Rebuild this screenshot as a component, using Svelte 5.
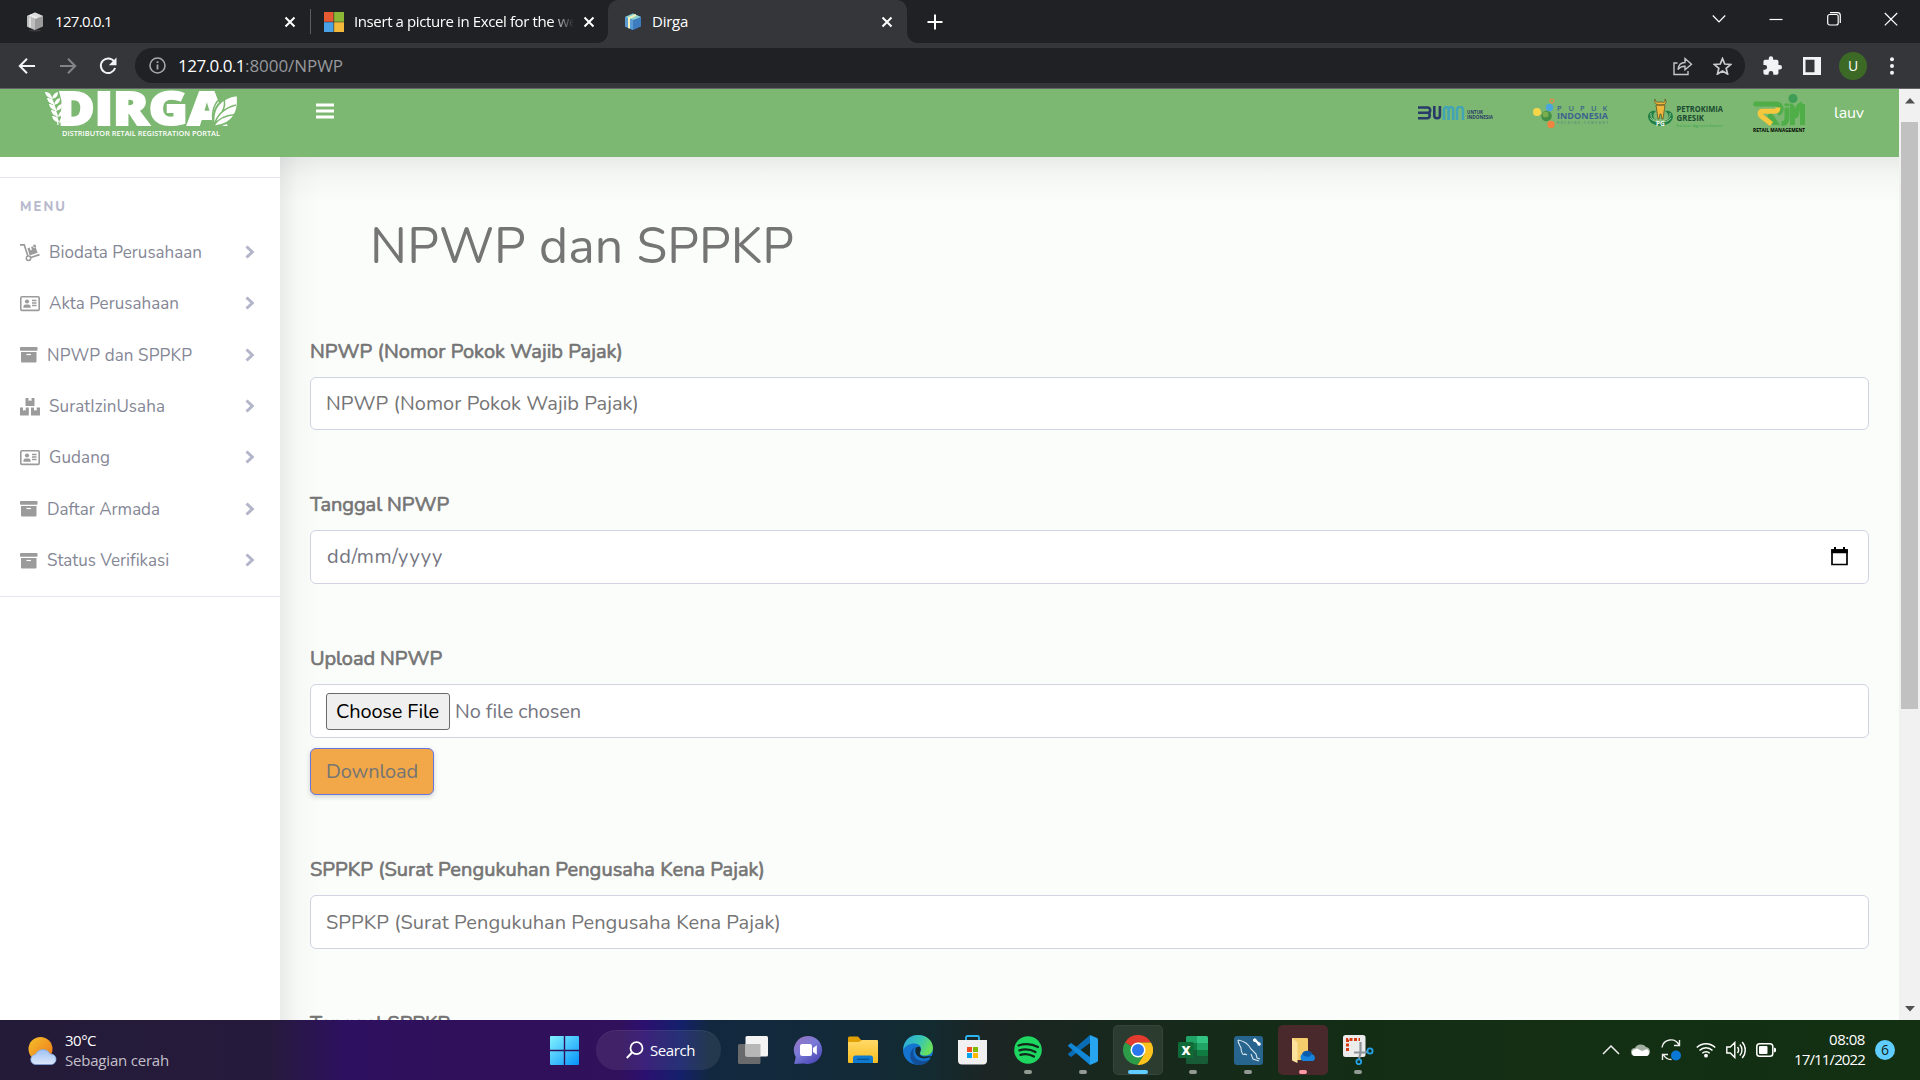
<script>
  // Spreads letters so that a label takes exactly the given width.
  function fit(node, width) {
    const natural = node.getBoundingClientRect().width;
    const count = node.textContent.length;
    node.style.letterSpacing = `${(width - natural) / count}px`;
  }

  const menu = [
    { icon: 'dolly', label: 'Biodata Perusahaan', w: 153 },
    { icon: 'card', label: 'Akta Perusahaan', w: 130 },
    { icon: 'box', label: 'NPWP dan SPPKP', w: 145 },
    { icon: 'boxes', label: 'SuratIzinUsaha', w: 116 },
    { icon: 'card', label: 'Gudang', w: 61 },
    { icon: 'box', label: 'Daftar Armada', w: 113 },
    { icon: 'box', label: 'Status Verifikasi', w: 122 }
  ];
</script>

{#snippet cross()}
  <svg width="12" height="12" viewBox="0 0 12 12"><path d="M1.5 1.5l9 9M10.5 1.5l-9 9" stroke="#fff" stroke-width="2" /></svg>
{/snippet}

{#snippet cube(dark)}
  <svg width="18" height="20" viewBox="0 0 18 20">
    {#if dark}
      <ellipse cx="9" cy="18.5" rx="6" ry="1" fill="#3a3a3c" />
      <path d="M1 4l8-3.5L17 4v10.500l-8 3.500-8-3.500z" fill="#9b9b9b" />
      <path d="M1 4l8-3.500L17 4 9 7z" fill="#ddd" /><path d="M1 4l8 3v11l-8-3.500z" fill="#bdbdbd" />
      <path d="M4 3l7 3M4 5.500v10" stroke="#f2f2f2" stroke-width="1.200" />
    {:else}
      <path d="M1 5l8-3.500L17 5v9.500L9 18l-8-3.500z" fill="#3e7cc0" />
      <path d="M1 5l8-3.500L17 5 9 8z" fill="#8fd3cf" /><path d="M1 5l8 3v10l-8-3.500z" fill="#5a9bd4" />
      <path d="M12 2.800L5 6.200v10" stroke="#f5f1b8" stroke-width="2" fill="none" />
    {/if}
  </svg>
{/snippet}

{#snippet menuIcon(kind)}
  {#if kind === 'dolly'}
    <svg class="mi" width="20" height="18" viewBox="0 0 20 18" fill="#9b9b9b">
      <path d="M0 .8h4.200l3.600 11M10 13.800l9.500-3.200" fill="none" stroke="#9b9b9b" stroke-width="1.700" />
      <circle cx="8.500" cy="14.300" r="2.200" fill="#fff" stroke="#9b9b9b" stroke-width="1.500" />
      <path d="M7.500 4.200l2-.7 1 2.800 1.500-.5L11 3l4-1.400 2.600 7.200-8 2.800z" /><path d="M12.500 1.200l1.300 3 1.600-.6-1-2.800" fill="#fff" />
      <path d="M12.800 1l2.600-.6.8 2.600-2 .6z" />
    </svg>
  {:else if kind === 'card'}
    <svg class="mi" width="20" height="16" viewBox="0 0 20 16" fill="#9b9b9b">
      <rect x=".8" y=".8" width="18.400" height="13.600" rx="1.200" fill="none" stroke="#9b9b9b" stroke-width="1.600" />
      <circle cx="7" cy="5.500" r="2.100" /><path d="M3.300 11.700c0-2 1-3.200 2.200-3.200h3c1.300 0 2.200 1.200 2.200 3.200z" />
      <path d="M12 4.500h4.500M12 7h4.500M12 9.500h4.500" stroke="#9b9b9b" stroke-width="1.300" />
    </svg>
  {:else if kind === 'box'}
    <svg class="mi" width="18" height="16" viewBox="0 0 18 16" fill="#9b9b9b">
      <rect x="0" y="0" width="17.500" height="3.700" rx=".8" /><path d="M1 5h15.500v9.500a1 1 0 0 1-1 1H2a1 1 0 0 1-1-1z" />
      <path d="M6.500 7.500h4.500" stroke="#fff" stroke-width="1.200" />
    </svg>
  {:else}
    <svg class="mi" width="20" height="18" viewBox="0 0 20 18" fill="#9b9b9b">
      <path d="M5.500 0h3v3.200l1.500-1 1.500 1V0h3v8h-9zM0 9.500h3v3.200l1.300-.8 1.400.8V9.500h3.100v8H0zM11 9.500h3v3.200l1.300-.8 1.400.8V9.500H20v8h-9z" />
    </svg>
  {/if}
{/snippet}

<div class="screen">
  <header class="tabs">
    <div class="tab first">
      {@render cube(true)}
      <span class="tt" use:fit={57}>127.0.0.1</span>
      <i class="x">{@render cross()}</i>
    </div>
    <div class="tab second">
      <svg width="20" height="20" viewBox="0 0 20 20"><path d="M0 0h9.800v10H0z" fill="#e65a33" /><path d="M9.800 0H20v10H9.800z" fill="#8bb734" /><path d="M0 10h9.800v10H0z" fill="#4ba1e6" /><path d="M9.800 10H20v10H9.800z" fill="#f2b93b" /><path d="M0 10h20M9.800 0v20" stroke="#202124" stroke-opacity=".45" /></svg>
      <span class="tt fade"><span class="tin" use:fit={223}>Insert a picture in Excel for the we</span></span>
      <i class="x">{@render cross()}</i>
    </div>
    <div class="tab active">
      {@render cube(false)}
      <span class="tt" use:fit={36}>Dirga</span>
      <i class="x">{@render cross()}</i>
    </div>
    <svg class="plus" width="16" height="16" viewBox="0 0 16 16"><path d="M8 .5v15M.5 8h15" stroke="#fff" stroke-width="2" /></svg>
    <div class="winctl">
      <svg width="14" height="14" viewBox="0 0 14 14"><path d="M.8 3.500L7 10l6.200-6.500" /></svg>
      <svg width="14" height="14" viewBox="0 0 14 14"><path d="M.5 7.500h13" /></svg>
      <svg width="14" height="14" viewBox="0 0 14 14"><rect x=".7" y="2.500" width="10.500" height="10.500" rx="2" /><path d="M3 .7h7.500a2.800 2.800 0 0 1 2.800 2.800V11" /></svg>
      <svg width="14" height="14" viewBox="0 0 14 14"><path d="M.8 1l12.400 12.400M13.200 1L.8 13.400" /></svg>
    </div>
  </header>

  <div class="toolbar">
    <svg class="nav" width="18" height="18" viewBox="0 0 18 18"><path d="M17 9H2M9 1.800L1.800 9 9 16.200" stroke="#f1f3f4" /></svg>
    <svg class="nav" width="18" height="18" viewBox="0 0 18 18"><path d="M1 9h15M9 1.800L16.200 9 9 16.200" stroke="#828488" /></svg>
    <svg class="nav" width="18" height="18" viewBox="0 0 18 18"><path d="M15.300 4.800A7.300 7.300 0 1 0 16.100 11" stroke="#f1f3f4" /><path d="M17.500.5v7.700H9.800z" fill="#f1f3f4" /></svg>
    <div class="omni">
      <svg width="17" height="17" viewBox="0 0 17 17"><circle cx="8.500" cy="8.500" r="7.500" fill="none" stroke="#a5a7ab" stroke-width="1.600" /><path d="M8.500 7.500v5M8.500 4.300v1.800" stroke="#a5a7ab" stroke-width="1.800" /></svg>
      <span class="url"><span use:fit={67}>127.0.0.1</span><span class="path" use:fit={98}>:8000/NPWP</span></span>
      <svg class="share" width="20" height="20" viewBox="0 0 20 20"><path d="M4.500 7H1v11.500h14V15M5 13.500c.5-5 3-7 7-7V2.500l6.500 5.800-6.500 5.500V10.200c-3.500 0-5.500 1-7 3.300z" fill="none" stroke="#c3c5c8" stroke-width="1.400" /></svg>
      <svg width="19" height="18" viewBox="0 0 24 23"><path d="M12 2l2.900 7 7.600.6-5.800 4.900 1.800 7.300L12 17.900l-6.500 3.900 1.800-7.300L1.500 9.600 9.100 9z" fill="none" stroke="#c9cbcf" stroke-width="2.200" /></svg>
    </div>
    <svg class="puzzle" width="19" height="19" viewBox="1.500 1 21.500 21" fill="#f1f3f4"><path d="M20.500 11H19V7a2 2 0 0 0-2-2h-4V3.500a2.500 2.500 0 0 0-5 0V5H4a2 2 0 0 0-2 2v3.800h1.500a2.700 2.700 0 0 1 0 5.400H2V20a2 2 0 0 0 2 2h3.800v-1.500a2.700 2.700 0 0 1 5.400 0V22H17a2 2 0 0 0 2-2v-4h1.500a2.500 2.500 0 0 0 0-5z" /></svg>
    <svg class="panel" width="18" height="18" viewBox="0 0 18 18"><path d="M0 0h18v18H0zM2.500 2.700v12.600h9V2.700z" fill="#f1f3f4" fill-rule="evenodd" /></svg>
    <span class="avatar">U</span>
    <svg class="dots" width="4" height="18" viewBox="0 0 4 18" fill="#f1f3f4"><circle cx="2" cy="2.200" r="2" /><circle cx="2" cy="9" r="2" /><circle cx="2" cy="15.800" r="2" /></svg>
  </div>

  <div class="viewport">
    <div class="site">
      <div class="topbar">
        <svg class="dirga" width="194" height="50" viewBox="0 0 194 50">
          <g fill="#fff">
            <text class="heavy" x="12" y="36" font-size="46" textLength="170" lengthAdjust="spacingAndGlyphs" stroke="#fff" stroke-width="2">DIRGA</text>
            <path d="M0 0h14.500l3 12-1 26H8L0 14z" fill="#7cb871" />
            <path d="M5 5c4 7 8 18 9 31" stroke="#fff" stroke-width="1.300" fill="none" />
            {#each [[1, 6], [3, 12], [5, 18], [7, 24], [8, 30]] as [x, y]}
              <path d="M{x} {y - 3}c4 0 6 2 7 6-4 0-6-2-7-6z" />
              <path d="M{x + 13} {y - 3}c-4 1-5 3-6 7 4-1 6-3 6-7z" />
            {/each}
            <path d="M170 37.500c-3-18 6-29 23.500-31.500 2 15-3 30-23.500 31.500z" stroke="#7cb871" stroke-width="2" />
            <path d="M170 36c-4-14 1-24 9-28 3 6 2 10-1 15M170 36c3-10 10-17 22-20M170 36.500c4-7 11-10 21-11" fill="none" stroke="#7cb871" stroke-width="1.500" />
            <text class="mont semi" x="18" y="47" font-size="7.500" textLength="158" lengthAdjust="spacingAndGlyphs">DISTRIBUTOR RETAIL REGISTRATION PORTAL</text>
          </g>
        </svg>
        <svg class="burger" width="18" height="16" viewBox="0 0 18 16"><path d="M0 2h18M0 8h18M0 14h18" stroke="#fff" stroke-width="2.800" /></svg>
        <div class="partners">
          <svg width="75" height="14" viewBox="0 0 75 14">
            <g fill="none" stroke-width="2.600">
              <path d="M0 1.500h9.500a2.600 2.600 0 0 1 0 5.300H0M9.500 6.800a2.800 2.800 0 0 1 0 5.500H0M16.300 0v9.500a2.800 2.800 0 0 0 5.600 0V0" stroke="#293b68" />
              <path d="M26 14V3.500a2.300 2.300 0 0 1 4.600 0V14M30.600 3.500a2.300 2.300 0 0 1 4.600 0V14M39 14V3.800a3 3 0 0 1 6 0V14" stroke="#43a4b5" />
            </g>
            <text class="mont" x="49" y="8.300" font-size="4.800" textLength="16" lengthAdjust="spacingAndGlyphs" fill="#293b68">UNTUK</text>
            <text class="mont" x="49" y="13" font-size="4.800" textLength="26" lengthAdjust="spacingAndGlyphs" fill="#293b68">INDONESIA</text>
          </svg>
          <svg width="75" height="30" viewBox="0 0 75 30">
            <path d="M4 13l9 5 4-9M13 18l5 9" stroke="#b7cf85" stroke-width="1.500" fill="none" />
            <circle cx="4" cy="14" r="4" fill="#f7d64a" /><circle cx="16.500" cy="9.500" r="3.700" fill="#4ba6dd" /><circle cx="13.500" cy="18" r="5.300" fill="#438f45" /><circle cx="12.500" cy="16.500" r="3" fill="#79ad4e" /><circle cx="18" cy="26.500" r="3.700" fill="#ee8440" /><circle cx="19" cy="2.800" r="2" fill="none" stroke="#df8e48" stroke-width="1.200" />
            <text class="mont semi" x="24 35.500 47 58 69.500" y="13.300" font-size="7.500" fill="#3b6689">PUPUK</text>
            <text class="mont" x="24" y="20.500" font-size="8" textLength="51" lengthAdjust="spacingAndGlyphs" fill="#3d6290">INDONESIA</text>
            <text class="mont" x="24" y="25.500" font-size="3" textLength="51" fill="#5d957a">HOLDING COMPANY</text>
          </svg>
          <svg width="75" height="30" viewBox="0 0 75 30">
            <path d="M8 13c-5-1-8 2-8 6 1 6 6 8 12 9 7-1 12-3 13-9 0-4-3-7-8-6 5 3 5 10-4 10-9 0-9-7-5-10z" fill="#218047" />
            <path d="M3 15c-1 5 3 8 9 8s11-3 10-8M2 20c4 5 17 6 21 0" fill="none" stroke="#9fca8b" />
            <path d="M7 1c-1 4 1 5 3 6h5c3-1 4-3 2-6 1 3-2 4-3 3h-3C9 5 7 3 7 1zM8 7h9l-1 7-1 7h-1l-1-5h-1l-1 5h-1L9 14z" fill="#efb73c" stroke="#5f5524" stroke-width=".8" />
            <text class="mont" x="8" y="27.500" font-size="6.500" fill="#eef7eb">PG</text>
            <text class="mont" x="28.500" y="14" font-size="8.500" textLength="46.500" lengthAdjust="spacingAndGlyphs" fill="#1b4b32">PETROKIMIA</text>
            <text class="mont" x="28.500" y="23" font-size="8.500" textLength="27.500" lengthAdjust="spacingAndGlyphs" fill="#1b4b32">GRESIK</text>
            <text class="mont" x="28.500" y="28.500" font-size="4" textLength="46.500" fill="#4fac59">Solusi Agroindustri</text>
          </svg>
          <svg class="rjm" width="52" height="40" viewBox="0 0 52 40">
            <path d="M2.500 11h20c6.500 0 7.500 7.500 2 9.500M34 14.500V24c0 5-1.500 6.500-5.500 6.500M34 13v-2.500M39.500 32V16c0-2 0-3-2.500-3M49.500 32V11M39.500 20c1 4 4 4.500 4.500-1 .5-4 1.500-7 5.500-8" fill="none" stroke="#4fae48" stroke-width="5" stroke-linecap="butt" />
            <circle cx="2.700" cy="11" r="2.500" fill="#4fae48" />
            <path d="M18 19l9 13h-7l-6-9z" fill="#4fae48" />
            <path d="M25 14.500c0 2.500-1 3.700-4 3.700H9.500c-3 0-3 3.500-1 5L18.500 31" fill="none" stroke="#f6c83d" stroke-width="5" />
            <circle cx="40" cy="5.500" r="4.500" fill="#3f9d55" />
            <text class="mont" x="0" y="38.800" font-size="4.600" textLength="52" lengthAdjust="spacingAndGlyphs" fill="#000">RETAIL MANAGEMENT</text>
          </svg>
          <span class="user" use:fit={30}>lauv</span>
        </div>
      </div>
      <div class="body">
        <nav class="side">
          <div class="menu">
            <h6>MENU</h6>
            {#each menu as m}
              <a class="item">
                {@render menuIcon(m.icon)}
                <span use:fit={m.w}>{m.label}</span>
                <svg class="chev" width="10" height="14" viewBox="0 0 10 14"><path d="M1.500 1.500L7.300 7l-5.800 5.500" fill="none" stroke="#b3b5c9" stroke-width="3" /></svg>
              </a>
            {/each}
          </div>
        </nav>
        <main>
          <h1><span use:fit={424}>NPWP dan SPPKP</span></h1>
          <div class="group">
            <label><span use:fit={313}>NPWP (Nomor Pokok Wajib Pajak)</span></label>
            <div class="field short"><span class="ph" use:fit={313}>NPWP (Nomor Pokok Wajib Pajak)</span></div>
          </div>
          <div class="group">
            <label><span use:fit={139}>Tanggal NPWP</span></label>
            <div class="field date">
              <span use:fit={116}>dd/mm/yyyy</span>
              <svg width="17" height="19" viewBox="0 0 17 19"><path d="M1 3h15v14.500H1z" fill="none" stroke="#000" stroke-width="1.700" /><path d="M.3 2.200h16.400v4H.3zM3 0h2v3H3zM12 0h2v3h-2z" /></svg>
            </div>
          </div>
          <div class="group">
            <label><span use:fit={132}>Upload NPWP</span></label>
            <div class="field file"><button class="choose"><span use:fit={103}>Choose File</span></button><span use:fit={126}>No file chosen</span></div>
            <button class="download"><span use:fit={92}>Download</span></button>
          </div>
          <div class="group">
            <label><span use:fit={455}>SPPKP (Surat Pengukuhan Pengusaha Kena Pajak)</span></label>
            <div class="field"><span class="ph" use:fit={455}>SPPKP (Surat Pengukuhan Pengusaha Kena Pajak)</span></div>
          </div>
          <div class="group"><label><span use:fit={140}>Tanggal SPPKP</span></label></div>
        </main>
      </div>
    </div>
    <div class="scroll">
      <svg width="10" height="6" viewBox="0 0 10 6"><path d="M0 5.500L5 0l5 5.500z" fill="#505050" /></svg>
      <div class="thumb"></div>
      <svg class="down" width="10" height="6" viewBox="0 0 10 6"><path d="M0 0h10L5 5.500z" fill="#505050" /></svg>
    </div>
  </div>

  <footer class="taskbar">
    <div class="weather">
      <svg width="29" height="30" viewBox="0 0 29 30">
        <defs>
          <linearGradient id="sun" x1="0" y1="0" x2="1" y2="1"><stop offset="0" stop-color="#f5c02c" /><stop offset="1" stop-color="#ee7519" /></linearGradient>
          <linearGradient id="cld" x1="0" y1="0" x2="0" y2="1"><stop offset="0" stop-color="#9fc1f3" /><stop offset="1" stop-color="#dce8fb" /></linearGradient>
        </defs>
        <circle cx="12.500" cy="13" r="12" fill="url(#sun)" />
        <path d="M8 28.500a5 5 0 0 1-.5-10A8 8 0 0 1 22 18a5.300 5.300 0 0 1 1.500 10.500z" fill="url(#cld)" stroke="#7ca6e6" stroke-width=".7" />
      </svg>
      <div class="wtext"><span use:fit={31}>30°C</span><span class="dim" use:fit={104}>Sebagian cerah</span></div>
    </div>
    <div class="apps">
      <div class="tile">
        <svg width="29" height="29" viewBox="0 0 29 29"><defs><linearGradient id="win" x1="0" y1="0" x2="1" y2="1"><stop offset="0" stop-color="#84f3ff" /><stop offset="1" stop-color="#0593fa" /></linearGradient></defs><path d="M1 0h12.800v13.800H0V1a1 1 0 0 1 1-1zM15.200 0H28a1 1 0 0 1 1 1v12.800H15.200zM0 15.200h13.800V29H1a1 1 0 0 1-1-1zM15.200 15.200H29V28a1 1 0 0 1-1 1H15.200z" fill="url(#win)" /></svg>
      </div>
      <div class="search">
        <svg width="18" height="18" viewBox="0 0 18 18"><circle cx="10.500" cy="7.200" r="6" fill="none" stroke="#fff" stroke-width="1.800" /><path d="M6 11.500L.8 17" stroke="#fff" stroke-width="1.900" /></svg>
        <span use:fit={45}>Search</span>
      </div>
      <div class="tile">
        <svg width="30" height="28" viewBox="0 0 30 28"><rect x="0" y="8" width="22.500" height="20" rx="1.500" fill="#696a6b" /><rect x="7.500" y="0" width="22.500" height="20.500" rx="1.500" fill="#f3f3f3" /><path d="M7.500 8h15v12.500h-14a1 1 0 0 1-1-1z" fill="#b7b7b7" /></svg>
      </div>
      <div class="tile">
        <svg width="30" height="30" viewBox="0 0 30 30"><defs><linearGradient id="cht" x1="0" y1="0" x2=".7" y2="1"><stop offset="0" stop-color="#9a72bd" /><stop offset=".5" stop-color="#7a7bd8" /><stop offset="1" stop-color="#4c49b6" /></linearGradient></defs><path d="M15 1a14 14 0 1 1-4 27.400L1.200 29l1.600-7A14 14 0 0 1 15 1z" fill="url(#cht)" /><rect x="7" y="9" width="12" height="12" rx="2.200" fill="#fff" /><path d="M20 13l3.800-2.700v9.400L20 17z" fill="#fff" /></svg>
      </div>
      <div class="tile">
        <svg width="30" height="28" viewBox="0 0 30 28"><defs><linearGradient id="fol" x1="0" y1="0" x2="0" y2="1"><stop offset="0" stop-color="#ffd968" /><stop offset="1" stop-color="#f8bd20" /></linearGradient></defs><path d="M0 2a1.500 1.500 0 0 1 1.500-1.500H10L13 4H27v6H0z" fill="#e1a006" /><path d="M0 6h11l3-2h15a1 1 0 0 1 1 1v21a1 1 0 0 1-1 1H1a1 1 0 0 1-1-1z" fill="url(#fol)" /><path d="M5 27v-5a2.500 2.500 0 0 1 2.500-2.500h15A2.500 2.500 0 0 1 25 22v5z" fill="#0f7bd0" /><path d="M9 23.300h12" stroke="#07528f" stroke-width="1.300" /></svg>
      </div>
      <div class="tile">
        <svg width="30" height="30" viewBox="0 0 30 30"><defs><linearGradient id="ed1" x1="0" y1="0" x2="1" y2=".4"><stop offset="0" stop-color="#2ba5df" /><stop offset=".6" stop-color="#39c7b0" /><stop offset="1" stop-color="#68e05c" /></linearGradient></defs><circle cx="15" cy="15" r="15" fill="#1574cf" /><path d="M.5 12C2 4 8 0 15 0c9 0 15 6 15 13 0 5-4 7.500-8 7.500-4 0-6-1.500-4.500-4 2-4-1-8-6-8C6 8.500 2 11 .5 15z" fill="url(#ed1)" /><path d="M12 12c-4 5-1 14 8 14 3 0 5-1 7-2-3 5-8 6-12 6-8-1-11-13-3-18z" fill="#124f98" /><path d="M13 12.500c-2 4 0 10 8 11l6-1c.8 0 1 .6.300 1.500l2-3-7.500.5c-4 0-6-2-4.500-5 1-2 .5-4-1-5z" fill="#132a30" /></svg>
      </div>
      <div class="tile">
        <svg class="store" width="29" height="30" viewBox="0 0 29 30"><path d="M8 6V2.500A1.500 1.500 0 0 1 9.500 1h10A1.500 1.500 0 0 1 21 2.500V6" fill="none" stroke="#2cb4f0" stroke-width="1.800" /><path d="M0 5h29v20.500a4 4 0 0 1-4 4H4a4 4 0 0 1-4-4z" fill="#f1f1f1" /><path d="M9 12h5v5H9z" fill="#f25022" /><path d="M15 12h5v5h-5z" fill="#7fba00" /><path d="M9 18h5v5H9z" fill="#00a4ef" /><path d="M15 18h5v5h-5z" fill="#ffb900" /></svg>
      </div>
      <div class="tile run">
        <svg width="28" height="28" viewBox="0 0 28 28"><circle cx="14" cy="14" r="13.800" fill="#1ed760" /><path d="M4.500 9.500c6-2 14-1.500 19.500 1.500M5.500 14.300c5-1.500 11-1 16 1.700M6.500 18.800c4-1.200 9-.8 13.500 1.700" fill="none" stroke="#13261b" stroke-width="2.300" stroke-linecap="round" /></svg>
      </div>
      <div class="tile run">
        <svg width="30" height="30" viewBox="0 0 30 30"><path d="M22 8L3 22l-2.500-2a1 1 0 0 1 0-1.600L22 0z" fill="#0a6cb5" /><path d="M22 22L3 8 .5 10a1 1 0 0 0 0 1.600L22 30z" fill="#1287d6" /><path d="M22 0l7 3a2 2 0 0 1 1 1.700v20.600a2 2 0 0 1-1 1.700l-7 3z" fill="#27a5f0" /></svg>
      </div>
      <div class="tile run current">
        <svg width="30" height="30" viewBox="0 0 30 30"><path d="M15 15L2 7.500A15 15 0 0 1 28 7.500H15z" fill="#e33b2e" /><path d="M15 15L2 7.500A15 15 0 0 0 14.500 30L21.500 18.500z" fill="#2c9c48" /><path d="M15 7.500h13A15 15 0 0 1 14.500 30l7-11.300z" fill="#fcc31e" /><circle cx="15" cy="15" r="7.500" fill="#fff" /><circle cx="15" cy="15" r="6" fill="#2b78ee" /></svg>
      </div>
      <div class="tile run">
        <svg width="30" height="28" viewBox="0 0 30 28"><path d="M8 1.500A1.500 1.500 0 0 1 9.500 0H19v7H8z" fill="#21a366" /><path d="M19 0h9.500A1.500 1.500 0 0 1 30 1.500V7H19z" fill="#33c481" /><path d="M8 7h11v7H8z" fill="#107c41" /><path d="M19 7h11v7H19z" fill="#21a366" /><path d="M8 14h22v12.500a1.500 1.500 0 0 1-1.500 1.500h-19A1.500 1.500 0 0 1 8 26.500z" fill="#185c37" /><path d="M19 14h11v6H19z" fill="#107c41" /><rect x="0" y="6" width="15.500" height="16" rx="1.300" fill="#0e6b38" /><text class="lib" x="3.600" y="18.500" font-size="12.500" fill="#fff">X</text></svg>
      </div>
      <div class="tile run">
        <svg width="29" height="29" viewBox="0 0 29 29"><rect width="29" height="29" rx="3" fill="#27648e" /><path d="M4 4c6 1 10 3 13 9l5 5 1 4 3 1M4 4c0 4 2 5 3 8 0 4 2 8 4 6l2 1M17 18l2 5 6 2" fill="none" stroke="#d6e4ee" stroke-width="1.100" /><path d="M20 3l6 6" stroke="#fff" stroke-width="2.400" /><circle cx="20.800" cy="4.200" r="1.800" fill="#fff" /><circle cx="25" cy="8" r="1.700" fill="#fff" /></svg>
      </div>
      <div class="tile run alert">
        <svg width="26" height="27" viewBox="0 0 26 27"><path d="M2 1h15a1 1 0 0 1 1 1v21H2z" fill="#f3cd6c" /><path d="M2 1l5.500 4.500V26L3 24a1.500 1.500 0 0 1-1-1.500z" fill="#fde29d" /><path d="M13 24a4 4 0 0 1 0-7.500 5.500 5.500 0 0 1 9.500 1 3.500 3.500 0 0 1 .5 6.500z" fill="#1683dc" /><path d="M12 17a5.500 5.500 0 0 1 10 0l-3 3-5-1z" fill="#0a5cad" /></svg>
      </div>
      <div class="tile run">
        <svg width="31" height="30" viewBox="0 0 31 30"><rect x="0" y="0" width="22.500" height="22" rx="2.500" fill="#ececec" /><path d="M4.500 16V4.500H17" fill="none" stroke="#d63b10" stroke-width="3" stroke-dasharray="3 1.500" /><path d="M17.500 7v11l-1.500 6M11 17.500h11l3-.7" fill="none" stroke="#8c9399" stroke-width="2.200" /><circle cx="27" cy="16" r="2.600" fill="none" stroke="#25a2e8" stroke-width="1.800" /><circle cx="15.800" cy="26.800" r="2.400" fill="none" stroke="#25a2e8" stroke-width="1.800" /></svg>
      </div>
    </div>
    <div class="tray">
      <svg width="18" height="10" viewBox="0 0 18 10"><path d="M1 9l8-8 8 8" fill="none" stroke="#eee" stroke-width="1.500" /></svg>
      <svg class="cloud" width="20" height="14" viewBox="0 0 20 14"><path d="M4 13a4 4 0 0 1 0-8 6.500 6.500 0 0 1 11-1 4.700 4.700 0 0 1 1 9z" fill="#a1aea2" /><path d="M4 13a3.500 3.500 0 0 1-2-6l4-1.500 5 2.500 5-2a4 4 0 0 1 0 7z" fill="#fff" /></svg>
      <svg class="sync" width="21" height="22" viewBox="0 0 21 22"><path d="M1 8.500A9 9 0 0 1 18 6M18.500 1v5.500H13M1.500 21v-5.500H7M2.500 16a9 9 0 0 0 8 4.500" fill="none" stroke="#eee" stroke-width="1.400" /><circle cx="15" cy="16.500" r="5" fill="#0a78d7" /></svg>
      <svg class="wifi" width="20" height="16" viewBox="0 0 20 16"><path d="M.8 5.500a13 13 0 0 1 18.400 0M3.500 8.500a9 9 0 0 1 13 0M6.300 11.300a5.300 5.300 0 0 1 7.400 0" fill="none" stroke="#fff" stroke-width="1.500" /><circle cx="10" cy="13.700" r="1.900" fill="#fff" /></svg>
      <svg class="vol" width="20" height="18" viewBox="0 0 20 18"><path d="M.8 6h3.500l4.500-4.500v15L4.300 12H.8zM11.500 6a5 5 0 0 1 0 6M13.800 3.500a8 8 0 0 1 0 11M16.200 1a12 12 0 0 1 0 16" fill="none" stroke="#fff" stroke-width="1.400" /></svg>
      <svg class="bat" width="20" height="14" viewBox="0 0 20 14"><rect x=".8" y=".8" width="16" height="12.400" rx="2.800" fill="none" stroke="#fff" stroke-width="1.500" /><rect x="3" y="3" width="8.500" height="8" rx="1" fill="#fff" /><path d="M18 4.500l2 1v3l-2 1z" fill="#fff" /></svg>
      <div class="clock"><span use:fit={36}>08:08</span><span use:fit={71}>17/11/2022</span></div>
      <span class="badge">6</span>
    </div>
  </footer>
</div>

<style>
  :global(body) { margin: 0; background: #202124; overflow: hidden; }
  .screen { width: 1920px; height: 1080px; display: flex; flex-direction: column; overflow: hidden; font-family: "Open Sans", "Noto Sans", sans-serif; }
  svg { display: block; flex: none; }
  span { white-space: nowrap; }
  .heavy { font-family: "Open Sans", sans-serif; font-weight: 800; }
  .mont { font-family: "Open Sans", sans-serif; font-weight: 700; }
  .semi { font-weight: 600; }
  .lib { font-family: "Open Sans", sans-serif; font-weight: 800; }

  .tabs { height: 43px; background: #202124; display: flex; align-items: center; color: #fff; font-size: 15px; }
  .tab { display: flex; align-items: center; height: 43px; box-sizing: border-box; }
  .tt { display: inline-block; line-height: 20px; margin-top: -2px; }
  .x { margin-left: auto; }
  .first { width: 311px; padding: 0 15px 0 26px; background: linear-gradient(#5c5d61, #5c5d61) right 9px / 1px 25px no-repeat; }
  .first .tt { margin-left: 11px; }
  .second { width: 297px; padding: 0 13px 0 13px; }
  .fade { width: 222px; overflow: hidden; margin-left: 10px; mask-image: linear-gradient(90deg, #000 89%, transparent 99%); }
  .tin { display: inline-block; }
  .active { position: relative; width: 299px; padding: 0 14px 0 16px; background: #35363a; border-radius: 10px 10px 0 0; }
  .active .tt { margin-left: 10px; }
  .active::before, .active::after { content: ""; position: absolute; bottom: 0; width: 10px; height: 10px; }
  .active::before { left: -10px; background: radial-gradient(circle at 0 0, transparent 9.500px, #35363a 10px); }
  .active::after { right: -10px; background: radial-gradient(circle at 100% 0, transparent 9.500px, #35363a 10px); }
  .plus { margin-left: 20px; }
  .winctl { margin-left: auto; display: flex; gap: 43.300px; padding: 0 22px 5px 0; }
  .winctl svg { fill: none; stroke: #fff; stroke-width: 1.200; }

  .toolbar { height: 46px; box-sizing: border-box; background: #35363a; border-bottom: 1px solid #626366; display: flex; align-items: center; padding: 0 26px 0 18px; }
  .nav { fill: none; stroke-width: 2; margin-right: 22.500px; }
  .nav:nth-child(3) { margin-right: 18px; }
  .omni { width: 1610px; height: 35px; border-radius: 18px; background: #202124; box-sizing: border-box; display: flex; align-items: center; padding: 0 13px 0 14px; }
  .url { margin: -1px 0 0 12px; font-size: 17px; color: #fff; display: flex; }
  .path { color: #96989c; }
  .share { margin: 0 20px 0 auto; }
  .puzzle { margin-left: 18px; }
  .panel { margin-left: 21px; }
  .avatar { width: 28px; height: 28px; border-radius: 50%; background: #3d6926; color: #fff; font-size: 14px; line-height: 28px; text-align: center; margin-left: 18px; }
  .dots { margin-left: auto; }

  .viewport { height: 931px; display: flex; overflow: hidden; }
  .site { width: 1899px; display: flex; flex-direction: column; font-family: Nunito, Lato, "Open Sans", sans-serif; }
  .topbar { height: 68px; flex: none; background: #7cb871; display: flex; }
  .dirga { margin-left: 44px; }
  .burger { margin: 14px 0 0 78px; }
  .partners { margin-left: auto; display: flex; align-items: center; height: 48px; padding-right: 35px; gap: 40px; }
  .partners .rjm { margin-left: -10px; }
  .user { margin-left: -11px; font-size: 16px; color: #fff; }
  .body { height: 863px; display: flex; background: #fbfdfa; }
  .side { width: 280px; flex: none; background: #fff; padding-top: 20px; box-sizing: border-box; }
  .menu { border: solid #e6e7ee; border-width: 1px 0; height: 420px; box-sizing: border-box; padding: 19px 20px 0; }
  h6 { margin: 0 0 10px; font-size: 13px; line-height: 20px; font-weight: 800; letter-spacing: 2.100px; color: #b7b9cc; }
  .item { display: flex; align-items: center; height: 51.330px; color: #858796; font-size: 17px; }
  .item span { margin-left: 9px; }
  .chev { margin: 0 5px 1px auto; }
  main { flex: 1; padding: 0 30px; overflow: hidden; box-sizing: border-box; background: linear-gradient(90deg, rgba(58,59,69,.09), rgba(58,59,69,.025) 18px, transparent 42px), linear-gradient(rgba(58,59,69,.09), rgba(58,59,69,.03) 20px, transparent 46px); }
  h1 { margin: 58px 0 0 60px; height: 124px; font-size: 50px; line-height: 64px; font-weight: 400; color: #757575; }
  .group { padding-bottom: 62px; font-size: 20px; color: #757575; }
  label { display: block; height: 24px; line-height: 26px; margin-bottom: 14px; -webkit-text-stroke: .65px #757575; }
  .field { height: 54px; box-sizing: border-box; border: 1px solid #d1d3e2; border-radius: 6px; background: #fff; display: flex; align-items: center; padding: 0 15px; }
  .short { height: 53px; }
  .date { padding: 0 16px 2px; }
  .date, .file { color: #757681; }
  .date svg { margin: 0 4px 0 auto; }
  .choose { height: 37px; width: 124px; padding: 1px 0 0 9px; text-align: left; box-sizing: border-box; border: 1px solid #6b6b6b; border-radius: 3px; background: #efefef; font: inherit; color: #000; margin-right: 5px; }
  .download { display: block; margin-top: 10px; width: 124px; height: 47px; padding: 0 0 0 15px; text-align: left; font: inherit; color: #757575; background: #f2a748; border: 1px solid #6676df; border-radius: 6px; box-shadow: 0 2px 5px rgba(58,59,69,.22); }
  .scroll { width: 21px; background: #f1f1f1; display: flex; flex-direction: column; align-items: center; padding: 9px 0 8px; box-sizing: border-box; }
  .thumb { width: 17px; height: 587px; background: #c1c1c1; margin-top: 18px; }
  .down { margin-top: auto; }

  .taskbar { height: 60px; display: flex; color: #fff; position: relative; font-size: 15px; background: linear-gradient(90deg, #241b38 0, #261a3c 270px, #2d1060 345px, #30105a 460px, #31105c 620px, #2c1070 645px, #14206b 680px, #12283f 710px, #132a38 860px, #132b30 930px, #1c2524 985px, #18281e 1100px, #152b18 1240px, #132e14 1400px, #133013 1920px); }
  .weather { width: 539px; display: flex; padding: 16px 0 0 28px; box-sizing: border-box; }
  .wtext { margin: -6px 0 0 8px; display: flex; flex-direction: column; align-items: flex-start; line-height: 20px; }
  .dim { color: #c4c0cb; }
  .apps { display: flex; gap: 5px; align-items: center; }
  .tile { width: 50px; height: 50px; display: flex; align-items: center; justify-content: center; border-radius: 5px; position: relative; }
  .store { margin-right: 1px; }
  .search { width: 125px; height: 40px; margin: 0 2px; border-radius: 20px; background: rgba(255,255,255,.08); box-shadow: inset 0 1px rgba(255,255,255,.06); display: flex; align-items: center; padding-left: 30px; gap: 6px; box-sizing: border-box; }
  .run::after { content: ""; position: absolute; left: 21px; bottom: 1px; width: 8px; height: 4px; border-radius: 2px; background: #929a94; }
  .current { background: rgba(255,255,255,.09); box-shadow: inset 0 0 0 1px rgba(255,255,255,.05); }
  .current::after { left: 15px; width: 20px; background: #60cdff; }
  .alert { background: #49292b; }
  .alert::after { background: #ff99a4; }
  .tray { margin-left: auto; display: flex; align-items: center; padding-right: 25px; }
  .cloud { margin-left: 11px; }
  .sync { margin-left: 10px; }
  .wifi { margin-left: 14px; }
  .vol { margin-left: 10px; }
  .bat { margin-left: 10px; }
  .clock { width: 89px; display: flex; flex-direction: column; align-items: flex-end; line-height: 20px; margin-top: -3px; }
  .badge { width: 20px; height: 20px; border-radius: 50%; margin-left: 10px; background: #60cdff; color: #10261a; text-align: center; line-height: 20px; font-size: 14px; }
</style>
